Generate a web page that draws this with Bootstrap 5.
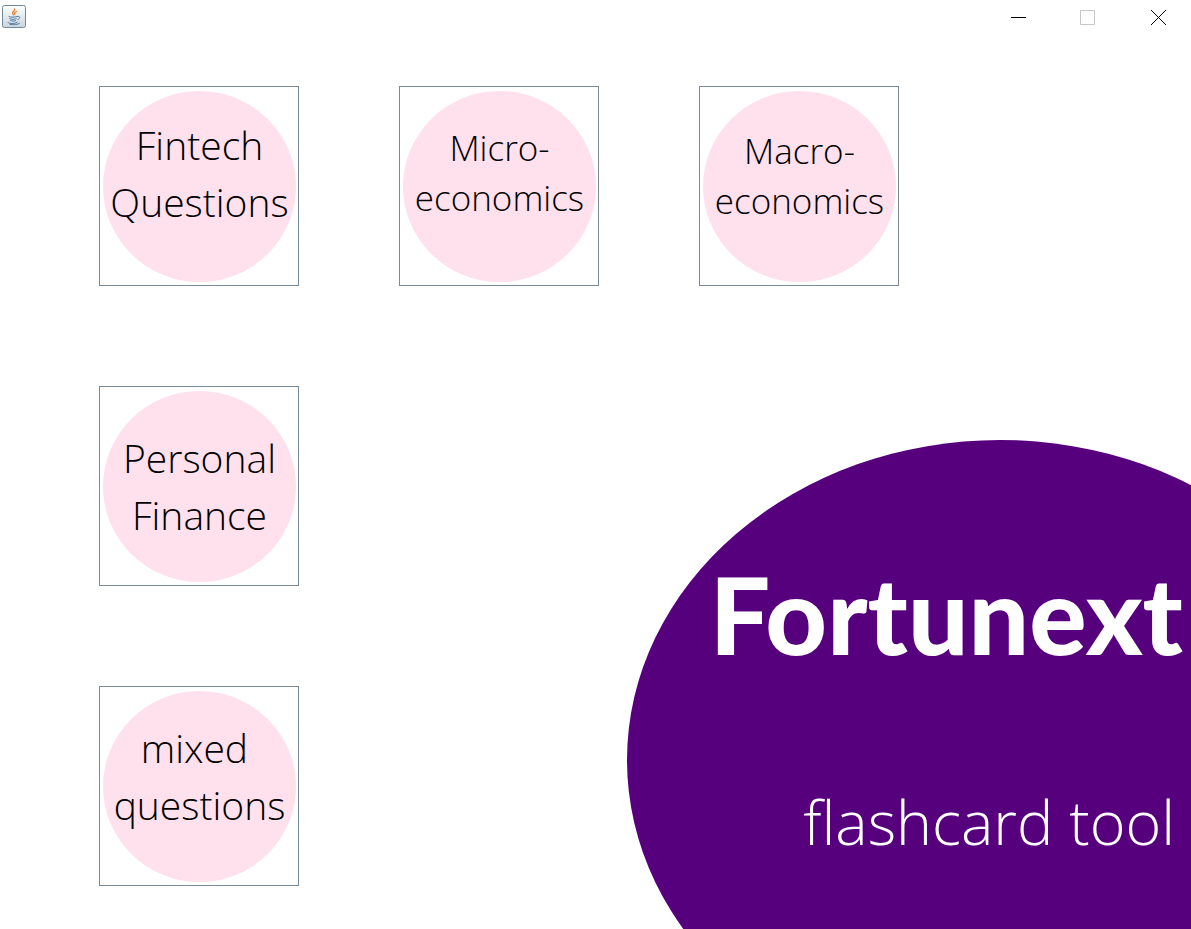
<!DOCTYPE html>
<html lang="en">
<head>
<meta charset="utf-8">
<meta name="viewport" content="width=device-width, initial-scale=1">
<title>Fortunext flashcard tool</title>
<link rel="stylesheet" href="https://cdn.jsdelivr.net/npm/bootstrap@5.3.0/dist/css/bootstrap.min.css">
<style>
  body { font-family: "Open Sans", "Noto Sans", sans-serif; font-weight: 300; color: #000; }
  .titlebar { height: 34px; padding-left: 2px; padding-right: 10px; }
  .window-controls { gap: 24px; }
  .window-btn { width: 46px; height: 34px; border: 0; border-radius: 0; }
  .board { padding: 52px 0 0 99px; gap: 100px; }
  .topics { gap: 100px; }
  .topic { width: 200px; height: 200px; padding: 4px 2px 3px 3px; background: #fff; border: 1px solid #7a8a99; color: #000; }
  .topic-disc { background: #ffe0ed; font-size: 39px; line-height: 57px; font-weight: 300; }
  .topic-disc.compact { font-size: 35px; line-height: 50px; }
  .set-high { padding-top: 25px; }
  .set-upper { padding-top: 28px; }
  .set-mid { padding-top: 32px; }
  .set-lower { padding-top: 35px; }
  .set-low { padding-top: 38px; }
  /* Oval badge, wider than the space it has and cut off by the window edge */
  .brand { margin: 54px 0 0 328px; min-height: 489px; padding: 106px 8px 0 0; gap: 100px; background: #56007e; clip-path: ellipse(373px 320px at 373px 320px); }
  .brand-name { font-family: Lato, "Open Sans", sans-serif; font-weight: 900; font-size: 107px; line-height: 136px; }
  .brand-tag { font-size: 61px; line-height: 80px; }
</style>
</head>
<body class="bg-white">
<div class="d-flex flex-column min-vh-100 overflow-hidden">
  <header class="titlebar d-flex justify-content-between align-items-center">
    <svg width="24" height="24" viewBox="0 0 24 24" role="img" aria-label="Java">
      <defs><linearGradient id="tile" x2="0" y2="1"><stop stop-color="#fdfefe"/><stop offset="1" stop-color="#c9d5de"/></linearGradient></defs>
      <rect x=".5" y=".5" width="23" height="22" rx="2" fill="url(#tile)" stroke="#72879a"/>
      <g fill="none" stroke-linecap="round">
        <path d="M12.600 4c1.500 2-3.500 2.600-1.700 4.800l.8 1.200M14.500 6.500c-2.600 1.200-2.300 1.900-1.600 2.800" stroke="#e9822d" stroke-width="1.300"/>
        <path d="M7 11.600c1.700.8 6.200.7 8-.1M7.700 13.700c1.800.8 4.700.8 6.500 0M8.500 15.600c1.500.7 3.700.7 5.200 0M15.500 11.500c3-.8 3 2.200.3 3M6 17.200c-1.500 1.800 8.500 1.800 9.500 0M8 19.400c4 .7 7.500.3 9.500-1" stroke="#537a9c"/>
      </g>
    </svg>
    <div class="window-controls d-flex">
      <button class="window-btn btn p-0 d-flex align-items-center justify-content-center" type="button" aria-label="Minimize"><svg width="16" height="16"><path d="M1 8.500h15" stroke="#000"/></svg></button>
      <button class="window-btn btn p-0 d-flex align-items-center justify-content-center" type="button" aria-label="Maximize" disabled><svg width="16" height="16"><path d="M.5 1.500h14v14H.5z" fill="none" stroke="#aaa"/></svg></button>
      <button class="window-btn btn p-0 d-flex align-items-center justify-content-center" type="button" aria-label="Close"><svg width="16" height="16"><path d="M1 1l15 15m0-15l-15 15" stroke="#000"/></svg></button>
    </div>
  </header>
  <main class="board d-flex flex-column flex-grow-1">
    <div class="topics d-flex">
      <button class="topic d-flex flex-shrink-0" type="button"><span class="topic-disc set-high rounded-circle w-100 h-100 text-nowrap">Fintech<br>Questions</span></button>
      <button class="topic d-flex flex-shrink-0" type="button"><span class="topic-disc compact set-mid rounded-circle w-100 h-100 text-nowrap">Micro-<br>economics</span></button>
      <button class="topic d-flex flex-shrink-0" type="button"><span class="topic-disc compact set-lower rounded-circle w-100 h-100 text-nowrap">Macro-<br>economics</span></button>
    </div>
    <div class="d-flex flex-grow-1">
      <div class="topics d-flex flex-column">
        <button class="topic d-flex flex-shrink-0" type="button"><span class="topic-disc set-low rounded-circle w-100 h-100 text-nowrap">Personal<br>Finance</span></button>
        <button class="topic d-flex flex-shrink-0" type="button"><span class="topic-disc set-upper rounded-circle w-100 h-100 text-nowrap">mixed&nbsp;<br>questions</span></button>
      </div>
      <section class="brand d-flex flex-column flex-grow-1 text-end text-white text-nowrap">
        <h1 class="brand-name m-0">Fortunext</h1>
        <p class="brand-tag m-0 pe-2">flashcard tool</p>
      </section>
    </div>
  </main>
</div>
<script src="https://cdn.jsdelivr.net/npm/bootstrap@5.3.0/dist/js/bootstrap.bundle.min.js"></script>
</body>
</html>
